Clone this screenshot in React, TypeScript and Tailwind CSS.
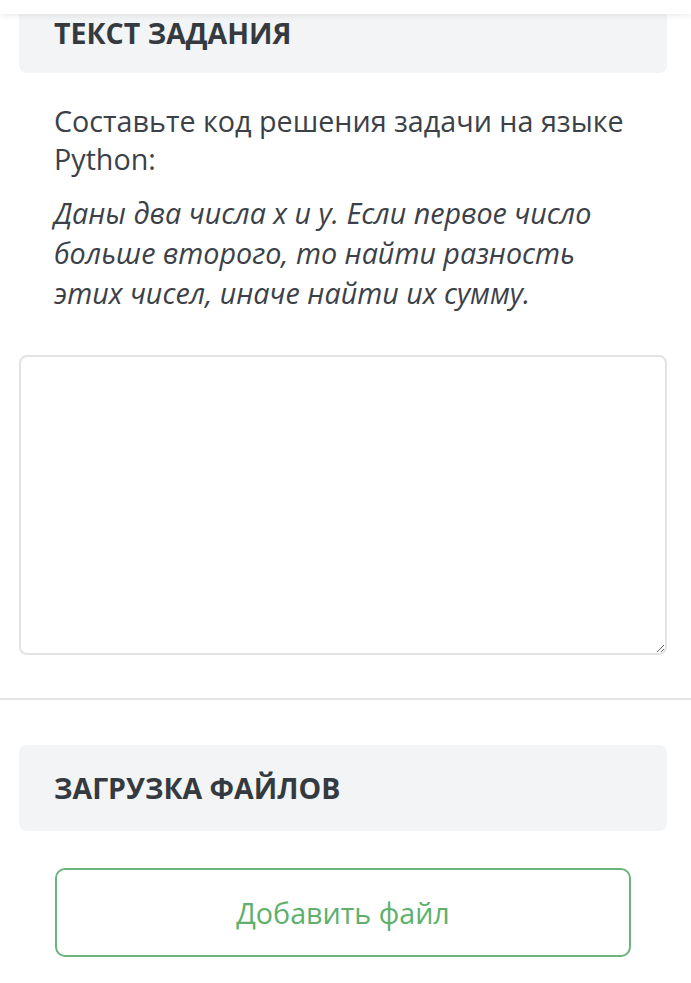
export default function App() {
  return (
    <div className="min-h-[983px] bg-white font-['Open_Sans',sans-serif] text-[#3b4147]">
      {/* top bar, only its lower edge is in view */}
      <div className="relative z-10 h-[14px] bg-white shadow-[0_2px_6px_rgba(0,0,0,0.08)]" />

      <section className="pr-[24px] pl-[19px]">
        <div className="-mt-[20px] flex h-[79px] items-end rounded-[8px] bg-[#f2f4f6] px-[35px] pb-[24px]">
          <h2 className="text-[28.5px] leading-[32px] font-bold text-[#343a40]">ТЕКСТ ЗАДАНИЯ</h2>
        </div>

        <div className="pt-[29px] pr-[20px] pl-[35px]">
          <p className="text-[28.7px] leading-[38px]">
            Составьте код решения задачи на языке Python:
          </p>
          <p className="mt-[15px] text-[28.7px] leading-[40px] italic">
            Даны два числа x и y. Если первое число больше второго, то найти разность этих
            чисел, иначе найти их сумму.
          </p>
        </div>

        <textarea className="mt-[42px] block h-[300px] w-full resize-y rounded-[8px] border-2 border-[#e3e3e3] bg-white p-3 text-[24px] outline-none" />
      </section>

      <hr className="mt-[43px] border-t-2 border-[#e6e6e6]" />

      <section className="pt-[45px] pr-[24px] pl-[19px]">
        <div className="flex h-[86px] items-center rounded-[8px] bg-[#f2f4f6] px-[35px]">
          <h2 className="text-[28.5px] leading-[32px] font-bold text-[#343a40]">ЗАГРУЗКА ФАЙЛОВ</h2>
        </div>

        <div className="pt-[37px] pl-[36px]">
          <button
            type="button"
            className="flex h-[89px] w-[576px] items-center justify-center rounded-[10px] border-2 border-[#6cb47b] bg-white text-[28.7px] text-[#5eb06c]"
          >
            Добавить файл
          </button>
        </div>
      </section>
    </div>
  );
}
